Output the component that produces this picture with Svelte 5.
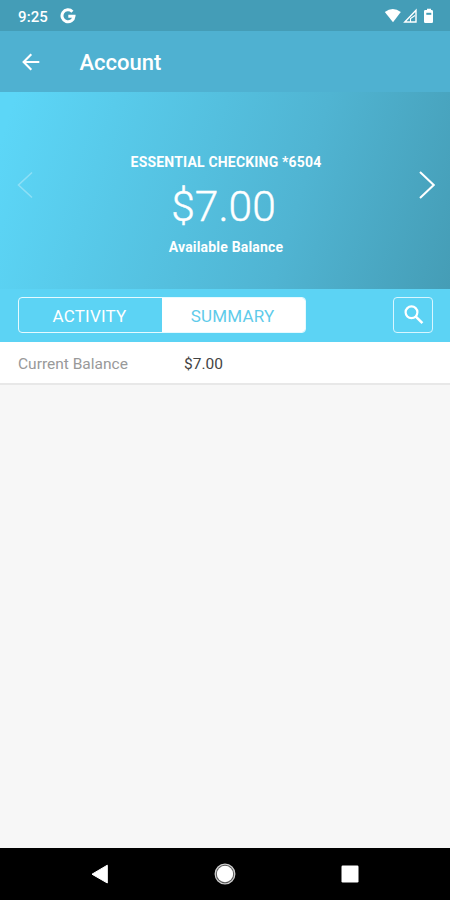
<script lang="ts">
    const account = {
        name: 'ESSENTIAL CHECKING *6504',
        available: '$7.00',
        current: '$7.00'
    };

    const tabs = ['ACTIVITY', 'SUMMARY'];
    let selected = $state('SUMMARY');
</script>

<div class="screen">
    <div class="status-bar">
        <span class="time">9:25</span>
        <svg class="google" width="16" height="16" viewBox="0 0 16 16" aria-hidden="true">
            <path d="M12.4 3.7A6 6 0 1 0 14 8.2H8.3" fill="none" stroke="#fff" stroke-width="3" />
        </svg>
        <svg class="signals" width="50" height="16" viewBox="0 0 50 16" aria-hidden="true">
            <path d="M0.8 4Q8.8 -2.2 16.8 4L9 14.2Z" fill="#fff" />
            <path d="M20.8 14L32 2.2V14Z" fill="none" stroke="#fff" stroke-width="1.4" />
            <path d="M26.5 14V10.5L31 7.5" fill="none" stroke="#fff" stroke-width="1.1" />
            <path d="M43 0.8h4v1.3h0.7q1.3 0 1.3 1.3v10.4q0 1.2-1.2 1.2h-6.6q-1.2 0-1.2-1.2v-10.4q0-1.3 1.3-1.3h1.7z" fill="#fff" />
            <path d="M42.3 4.8h5v2h-5z" fill="#449db7" />
        </svg>
    </div>

    <header class="app-bar">
        <button class="back" aria-label="Back">
            <svg width="18" height="18" viewBox="0 0 18 18">
                <path d="M17.3 9H2M9.3 1.2L1.6 9l7.7 7.8" fill="none" stroke="#fff" stroke-width="2.1" />
            </svg>
        </button>
        <h1>Account</h1>
    </header>

    <section class="hero">
        <button class="arrow disabled" aria-label="Previous account">
            <svg width="16" height="28" viewBox="0 0 16 28">
                <path d="M15 1.5L1.5 14L15 26.5" fill="none" stroke="#fff" stroke-width="1.6" />
            </svg>
        </button>
        <div class="balance">
            <span class="name">{account.name}</span>
            <span class="amount">{account.available}</span>
            <span class="label">Available Balance</span>
        </div>
        <button class="arrow" aria-label="Next account">
            <svg width="16" height="28" viewBox="0 0 16 28">
                <path d="M1 1L14.7 14L1 27" fill="none" stroke="#fff" stroke-width="2" />
            </svg>
        </button>
    </section>

    <nav class="tabs">
        <div class="segmented">
            {#each tabs as tab}
                <button class:active={selected === tab} onclick={() => (selected = tab)}>{tab}</button>
            {/each}
        </div>
        <button class="search" aria-label="Search">
            <svg width="20" height="20" viewBox="0 0 20 20">
                <circle cx="7.5" cy="7.3" r="5.9" fill="none" stroke="#fff" stroke-width="2.2" />
                <path d="M11.6 11.4L18.4 18.2" stroke="#fff" stroke-width="2.6" />
            </svg>
        </button>
    </nav>

    <div class="row">
        <span class="row-label">Current Balance</span>
        <span class="row-value">{account.current}</span>
    </div>

    <footer class="nav-bar">
        <svg width="18" height="20" viewBox="0 0 18 20">
            <path d="M1 10.2L16.3 1.2V19Z" fill="#fff" stroke="#fff" stroke-linejoin="round" />
        </svg>
        <svg width="22" height="22" viewBox="0 0 22 22">
            <circle cx="11" cy="11" r="9.8" fill="#555" stroke="#ccc" stroke-width="1.3" />
            <circle cx="11" cy="11" r="8.2" fill="#fff" />
        </svg>
        <svg width="18" height="18" viewBox="0 0 18 18">
            <rect x="0.5" y="0.5" width="17" height="17" rx="1.2" fill="#fff" />
        </svg>
    </footer>
</div>

<style>
    :global(body) {
        margin: 0;
    }

    .screen {
        width: 450px;
        height: 900px;
        display: flex;
        flex-direction: column;
        background: #f7f7f7;
        font-family: Roboto, 'Liberation Sans', sans-serif;
        color: #fff;
        overflow: hidden;
    }

    button {
        padding: 0;
        border: 0;
        background: none;
        color: inherit;
        font: inherit;
    }

    svg {
        display: block;
        flex: none;
    }

    .status-bar {
        height: 31px;
        box-sizing: border-box;
        padding: 1px 16px 0 18px;
        display: flex;
        align-items: center;
        background: #449db7;
    }

    .time {
        width: 42px;
        padding-top: 1px;
        font-size: 15px;
        font-weight: 500;
        letter-spacing: 0.1px;
    }

    .signals {
        margin-left: auto;
    }

    .app-bar {
        height: 61px;
        box-sizing: border-box;
        padding: 0 22px;
        display: flex;
        align-items: center;
        background: #4fb1d1;
    }

    h1 {
        margin: 3px 0 0 39.5px;
        font-size: 22px;
        font-weight: 500;
        line-height: 26px;
    }

    .hero {
        height: 197px;
        box-sizing: border-box;
        padding: 0 15px 0 17px;
        display: flex;
        justify-content: space-between;
        background: linear-gradient(107deg, #5cd6f7 3%, #50b4d2 65%, #459db6 100%);
    }

    .arrow {
        align-self: flex-start;
        margin-top: 79px;
    }

    .disabled {
        opacity: 0.3;
    }

    .balance {
        padding-top: 61px;
        display: flex;
        flex-direction: column;
        align-items: center;
    }

    .name,
    .label {
        font-size: 14px;
        font-weight: 700;
        line-height: 18px;
        letter-spacing: 0.18px;
    }

    .amount {
        margin: 5px 5px 1px 0;
        font-size: 42.5px;
        font-weight: 300;
        line-height: 61px;
        -webkit-text-stroke: 0.4px #fff;
    }

    .tabs {
        height: 53px;
        box-sizing: border-box;
        padding: 8px 17px 0 18px;
        display: flex;
        justify-content: space-between;
        align-items: flex-start;
        background: #5cd3f4;
    }

    .segmented {
        width: 288px;
        height: 36px;
        box-sizing: border-box;
        display: flex;
        border: 1.5px solid #e6faff;
        border-radius: 4px;
        overflow: hidden;
    }

    .segmented button {
        flex: 1;
        padding: 2px 2px 0 0;
        font-size: 17px;
        letter-spacing: 0.2px;
        color: #fff;
    }

    .segmented .active {
        background: #fff;
        color: #5fcbea;
    }

    .search {
        width: 40px;
        height: 36px;
        box-sizing: border-box;
        padding: 0 0 0 2px;
        display: flex;
        align-items: center;
        justify-content: center;
        border: 1.5px solid #d8f6ff;
        border-radius: 4px;
    }

    .row {
        height: 43px;
        box-sizing: border-box;
        padding: 3px 18px 0;
        display: flex;
        align-items: center;
        background: #fff;
        border-bottom: 2px solid #e8e8e8;
        font-size: 15.5px;
    }

    .row-label {
        width: 166px;
        color: #999;
    }

    .row-value {
        color: #444;
    }

    .nav-bar {
        height: 52px;
        box-sizing: border-box;
        margin-top: auto;
        padding: 0 91px;
        display: flex;
        align-items: center;
        justify-content: space-between;
        background: #000;
    }
</style>
